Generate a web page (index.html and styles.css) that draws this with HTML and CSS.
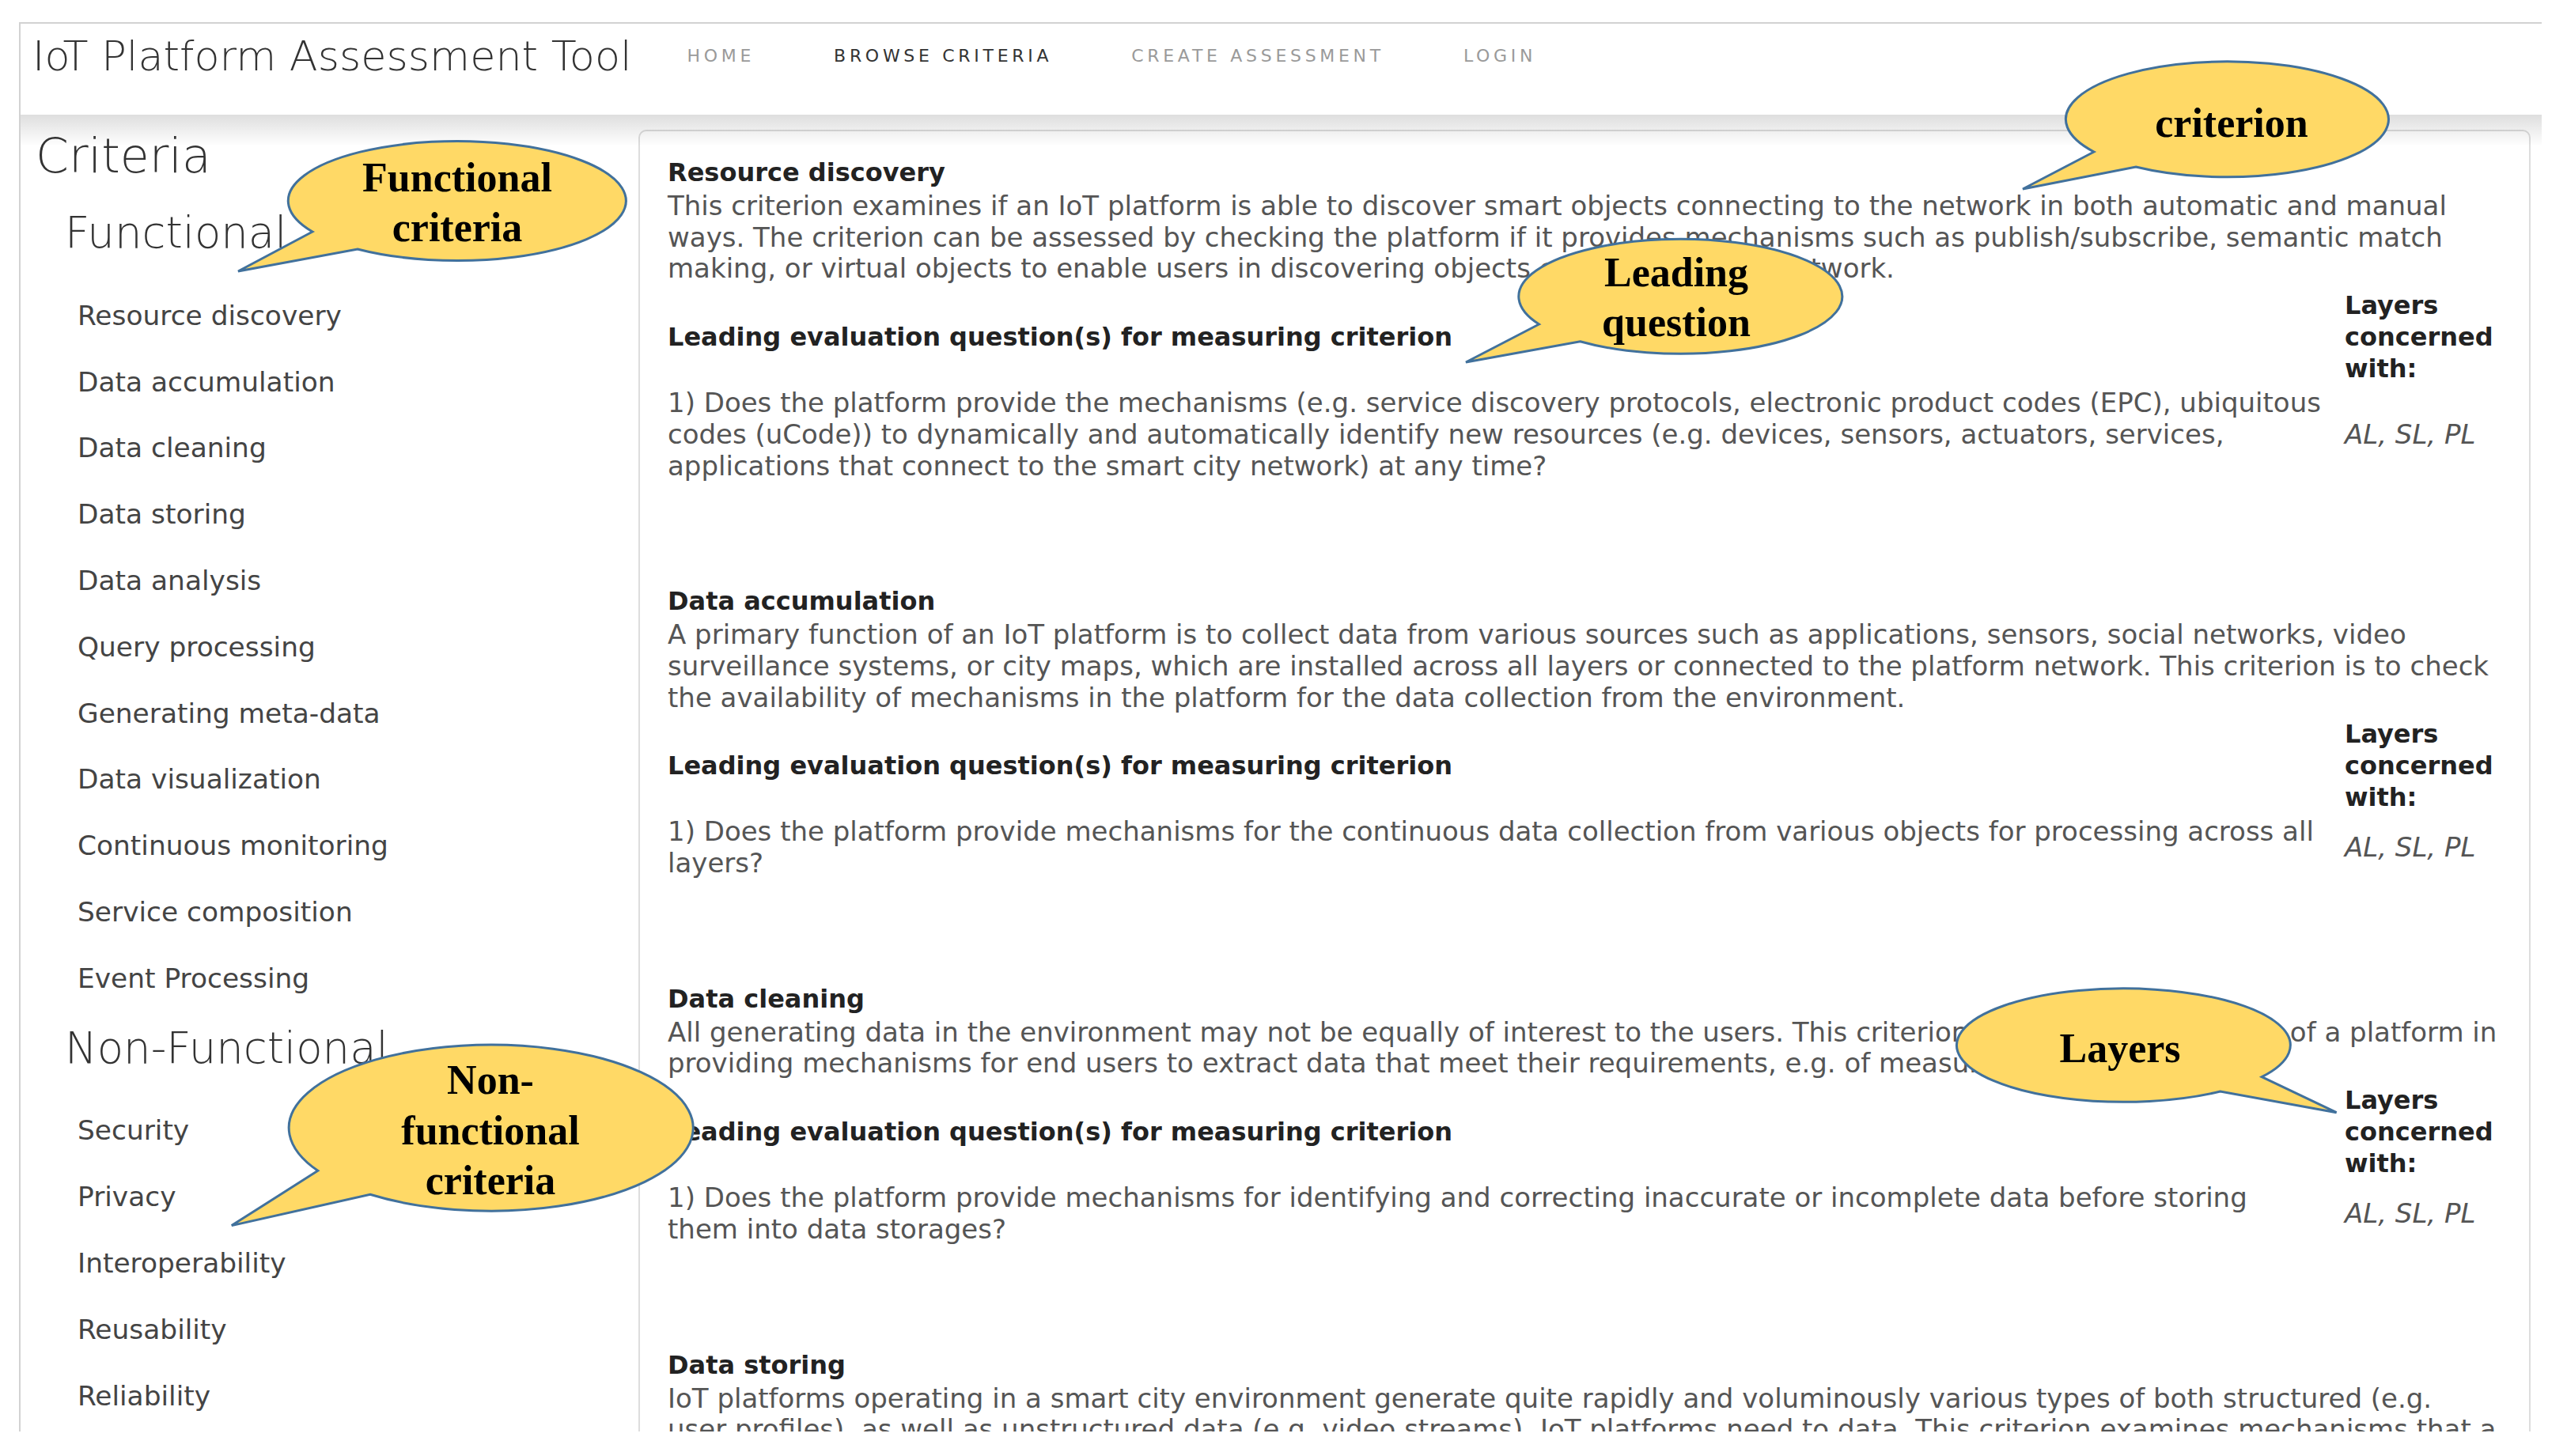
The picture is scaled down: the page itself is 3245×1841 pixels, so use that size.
FILE: index.html
```html
<!DOCTYPE html>
<html lang="en">
<head>
	<meta charset="UTF-8">
	<title>IoT Platform Assessment Tool - Browse Criteria</title>
	<link rel="stylesheet" href="styles.css">
</head>
<body>
	<div class="page">
		<header class="navbar">
			<a class="brand" href="#">IoT Platform Assessment Tool</a>
			<ul class="nav">
				<li><a href="#">HOME</a></li>
				<li class="active"><a href="#">BROWSE CRITERIA</a></li>
				<li><a href="#">CREATE ASSESSMENT</a></li>
				<li><a href="#">LOGIN</a></li>
			</ul>
		</header>

		<div class="main">
			<!-- criteria menu -->
			<aside class="sidebar">
				<h1>Criteria</h1>
				<h2>Functional</h2>
				<ul>
					<li>Resource discovery</li>
					<li>Data accumulation</li>
					<li>Data cleaning</li>
					<li>Data storing</li>
					<li>Data analysis</li>
					<li>Query processing</li>
					<li>Generating meta-data</li>
					<li>Data visualization</li>
					<li>Continuous monitoring</li>
					<li>Service composition</li>
					<li>Event Processing</li>
				</ul>
				<h2>Non-Functional</h2>
				<ul>
					<li>Security</li>
					<li>Privacy</li>
					<li>Interoperability</li>
					<li>Reusability</li>
					<li>Reliability</li>
					<li>Scalability</li>
				</ul>
			</aside>

			<!-- criteria list -->
			<section class="panel">
				<div class="criterion">
					<h4>Resource discovery</h4>
					<p class="desc">This criterion examines if an IoT platform is able to discover smart objects connecting to the network in both automatic and manual ways. The criterion can be assessed by checking the platform if it provides mechanisms such as publish/subscribe, semantic match making, or virtual objects to enable users in discovering objects connected to the network.</p>
					<div class="lead">
						<h5>Leading evaluation question(s) for measuring criterion</h5>
						<h5>Layers concerned with:</h5>
						<p>1) Does the platform provide the mechanisms (e.g. service discovery protocols, electronic product codes (EPC), ubiquitous codes (uCode)) to dynamically and automatically identify new resources (e.g. devices, sensors, actuators, services, applications that connect to the smart city network) at any time?</p>
						<p><em>AL, SL, PL</em></p>
					</div>
				</div>

				<div class="criterion">
					<h4>Data accumulation</h4>
					<p class="desc">A primary function of an IoT platform is to collect data from various sources such as applications, sensors, social networks, video surveillance systems, or city maps, which are installed across all layers or connected to the platform network. This criterion is to check the availability of mechanisms in the platform for the data collection from the environment.</p>
					<div class="lead">
						<h5>Leading evaluation question(s) for measuring criterion</h5>
						<h5>Layers concerned with:</h5>
						<p>1) Does the platform provide mechanisms for the continuous data collection from various objects for processing across all layers?</p>
						<p><em>AL, SL, PL</em></p>
					</div>
				</div>

				<div class="criterion">
					<h4>Data cleaning</h4>
					<p class="desc">All generating data in the environment may not be equally of interest to the users. This criterion examines the capacity of a platform in providing mechanisms for end users to extract data that meet their requirements, e.g. of measurement accuracy.</p>
					<div class="lead">
						<h5>Leading evaluation question(s) for measuring criterion</h5>
						<h5>Layers concerned with:</h5>
						<p>1) Does the platform provide mechanisms for identifying and correcting inaccurate or incomplete data before storing<br>them into data storages?</p>
						<p><em>AL, SL, PL</em></p>
					</div>
				</div>

				<div class="criterion">
					<h4>Data storing</h4>
					<p class="desc">IoT platforms operating in a smart city environment generate quite rapidly and voluminously various types of both structured (e.g. user&nbsp;profiles), as well as unstructured data (e.g. video streams). IoT platforms need to data. This criterion examines mechanisms that a platform provides for storing the data.</p>
				</div>
			</section>
		</div>
	</div>

	<!-- annotation callouts -->
	<svg class="callouts" viewBox="0 0 3245 1841">
		<path d="M395 293 L301 343 L452 315 A213.5 75.5 0 1 0 395 293 Z"/>
		<text x="578" y="242">Functional</text>
		<text x="578" y="305">criteria</text>

		<path d="M2647 192 L2557 239 L2700 211 A204 73 0 1 0 2647 192 Z"/>
		<text x="2821" y="173">criterion</text>

		<path d="M1945.5 410 L1853 458 L1997.5 431.7 A204.5 72.5 0 1 0 1945.5 410 Z"/>
		<text x="2119" y="362">Leading</text>
		<text x="2119" y="425">question</text>

		<path d="M401.8 1480.3 L292.8 1549.6 L467.9 1510.3 A255.5 105 0 1 0 401.8 1480.3 Z"/>
		<text x="620" y="1383">Non-</text>
		<text x="620" y="1447">functional</text>
		<text x="620" y="1510">criteria</text>

		<path d="M2859.2 1361.7 L2953.6 1406.7 L2806.7 1380 A210.9 71.7 0 1 1 2859.2 1361.7 Z"/>
		<text x="2680" y="1343">Layers</text>
	</svg>
</body>
</html>
```

FILE: styles.css
```css
*{box-sizing:border-box;}
body{margin:0;background:#fff;font-family:"DejaVu Sans","Liberation Sans",sans-serif;font-size:34px;line-height:39.7px;color:#555;}
ul{list-style:none;margin:0;padding:0;}
p{margin:0;}
a{text-decoration:none;color:inherit;}

.page{position:relative;width:3189px;height:1782px;margin:28px 0 0 24px;border-top:2px solid #d2d2d2;border-left:2px solid #d2d2d2;overflow:hidden;}

/* top bar */
.navbar{position:relative;z-index:1;display:flex;align-items:flex-start;height:115px;padding:11px 0 0 15px;background:#fff;}
.navbar::after{content:"";position:absolute;left:0;right:0;top:100%;height:40px;background:linear-gradient(rgba(0,0,0,.13),rgba(0,0,0,0));pointer-events:none;}
.brand{font-size:52.4px;line-height:60px;font-weight:300;color:#333;}
.nav{display:flex;margin:0 0 0 20px;}
.nav a{display:block;padding:0 50px;font-size:22px;line-height:60px;letter-spacing:4.7px;color:#9a9a9a;}
.nav .active a{color:#333;}

.main{display:grid;grid-template-columns:781px 1fr;padding:19px 14px 0 0;}

/* left menu */
.sidebar h1{margin:0 0 34px;padding-left:19px;font-size:60px;line-height:66px;font-weight:300;color:#333;}
.sidebar h2{margin:16px 0 33px;padding-left:56px;font-size:54.5px;line-height:60px;font-weight:300;color:#333;}
.sidebar li{padding:21.9px 0 21.9px 72px;font-size:34.4px;line-height:40px;color:#444;}

/* criteria panel */
.panel{border:2px solid #ddd;border-radius:10px;padding:32px 37px 0 35px;}
.criterion{margin-bottom:131px;}
.criterion h4,.criterion h5{margin:0;font-size:32px;line-height:40px;font-weight:bold;color:#222;}
.criterion h4{margin-bottom:3px;}
.desc{margin-bottom:6px;}
.lead{display:grid;grid-template-columns:1fr 196px;column-gap:16px;row-gap:4px;align-items:center;}

/* callouts drawn over the page */
.callouts{position:absolute;z-index:2;top:0;left:0;width:3245px;height:1841px;pointer-events:none;}
.callouts path{fill:#ffd966;stroke:#41719c;stroke-width:3;}
.callouts text{font-family:"Liberation Serif","Times New Roman",serif;font-weight:bold;font-size:52px;fill:#000;text-anchor:middle;}
```
